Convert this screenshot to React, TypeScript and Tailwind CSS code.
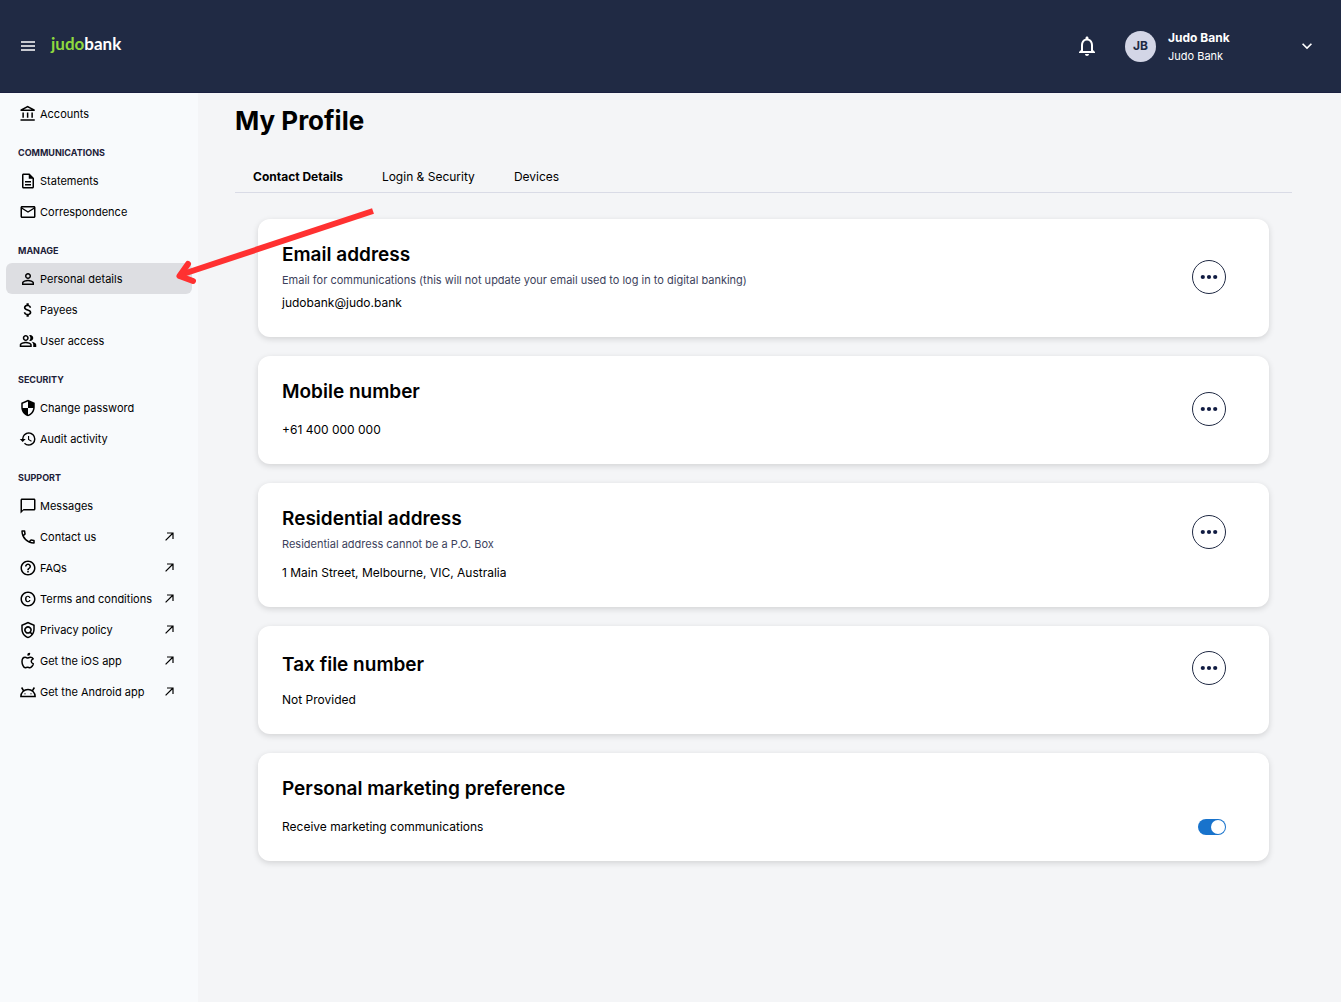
import { ReactNode } from "react";
import { IconType } from "react-icons";
import {
  MdAttachMoney,
  MdCopyright,
  MdHelpOutline,
  MdHistory,
  MdKeyboardArrowDown,
  MdNotificationsNone,
  MdOutlineAccountBalance,
  MdOutlineChatBubbleOutline,
  MdOutlineDescription,
  MdOutlineLocalPhone,
  MdOutlineMail,
  MdOutlinePeopleAlt,
  MdOutlinePolicy,
  MdPersonOutline,
  MdSecurity,
} from "react-icons/md";
import { TbBrandApple } from "react-icons/tb";

type NavItem = {
  label: string;
  icon: ReactNode;
  active?: boolean;
  external?: boolean;
};

type NavGroup = {
  title?: string;
  items: NavItem[];
};

const icon = (Icon: IconType) => <Icon className="size-[18px]" />;

const groups: NavGroup[] = [
  { items: [{ label: "Accounts", icon: icon(MdOutlineAccountBalance) }] },
  {
    title: "Communications",
    items: [
      { label: "Statements", icon: icon(MdOutlineDescription) },
      { label: "Correspondence", icon: icon(MdOutlineMail) },
    ],
  },
  {
    title: "Manage",
    items: [
      { label: "Personal details", icon: icon(MdPersonOutline), active: true },
      { label: "Payees", icon: icon(MdAttachMoney) },
      { label: "User access", icon: icon(MdOutlinePeopleAlt) },
    ],
  },
  {
    title: "Security",
    items: [
      { label: "Change password", icon: icon(MdSecurity) },
      { label: "Audit activity", icon: icon(MdHistory) },
    ],
  },
  {
    title: "Support",
    items: [
      { label: "Messages", icon: icon(MdOutlineChatBubbleOutline) },
      { label: "Contact us", icon: icon(MdOutlineLocalPhone), external: true },
      { label: "FAQs", icon: icon(MdHelpOutline), external: true },
      { label: "Terms and conditions", icon: icon(MdCopyright), external: true },
      { label: "Privacy policy", icon: icon(MdOutlinePolicy), external: true },
      { label: "Get the iOS app", icon: icon(TbBrandApple), external: true },
      { label: "Get the Android app", icon: <AndroidIcon />, external: true },
    ],
  },
];

const tabs = ["Contact Details", "Login & Security", "Devices"];

export default function App() {
  return (
    <div className="relative flex min-h-screen flex-col bg-[#f4f5f7] font-['Inter',sans-serif] text-black">
      <Header />
      <div className="flex flex-1">
        <Sidebar />
        <main className="min-w-0 flex-1 pr-[49px] pl-[37px]">
          <h1 className="pt-2.5 text-[26px] leading-9 font-bold">My Profile</h1>
          <nav className="mt-7 flex gap-[39px] border-b border-[#d9dbe6] px-[18px] pb-[5px]" aria-label="Profile sections">
            {tabs.map((t, i) => (
              <a key={t} href="#" className={i === 0 ? "text-xs leading-5 font-bold" : "text-xs leading-5"}>
                {t}
              </a>
            ))}
          </nav>
          <div className="flex flex-col gap-[19px] px-[23px] py-[26px]">
            <Card
              title="Email address"
              hint="Email for communications (this will not update your email used to log in to digital banking)"
              action={<MoreButton label="Edit email address" />}
            >
              <p className="mt-0.5">judobank@judo.bank</p>
            </Card>
            <Card title="Mobile number" action={<MoreButton label="Edit mobile number" />}>
              <p className="mt-3.5">+61 400 000 000</p>
            </Card>
            <Card
              title="Residential address"
              hint="Residential address cannot be a P.O. Box"
              action={<MoreButton label="Edit residential address" className="mt-2.5 self-start" />}
            >
              <p className="mt-2">1 Main Street, Melbourne, VIC, Australia</p>
            </Card>
            <Card
              title="Tax file number"
              className="pt-[25px]"
              action={<MoreButton label="Edit tax file number" className="self-start" />}
            >
              <p className="mt-[11px]">Not Provided</p>
            </Card>
            <Card title="Personal marketing preference" action={<Toggle />}>
              <label htmlFor="marketing" className="mt-3.5 block">
                Receive marketing communications
              </label>
            </Card>
          </div>
        </main>
      </div>
      <Pointer />
    </div>
  );
}

function Header() {
  return (
    <header className="flex h-[93px] items-center border-b border-[#1a2040] bg-[#202a44] pr-6 pl-[21px] text-white">
      <button aria-label="Toggle menu">
        <svg width="14" height="10" viewBox="0 0 14 10" stroke="currentColor" strokeWidth="1.3">
          <path d="M0 1h14M0 5h14M0 9h14" />
        </svg>
      </button>
      <a href="#" className="ml-4 pb-1 font-['Lato',sans-serif] text-[17px] leading-6 font-bold">
        <span className="text-[#8fd93f]">judo</span>
        <span>bank</span>
      </a>
      <button aria-label="Notifications" className="ml-auto">
        <MdNotificationsNone className="size-6" />
      </button>
      <button className="ml-[26px] flex w-[192px] items-center text-left">
        <span className="flex size-[31px] items-center justify-center rounded-full bg-[#d3d6e6] text-xs font-bold text-[#202a44]">
          JB
        </span>
        <span className="ml-3 flex flex-col pt-0.5">
          <span className="text-xs leading-[18px] font-bold">Judo Bank</span>
          <span className="text-[11px] leading-[18px]">Judo Bank</span>
        </span>
        <MdKeyboardArrowDown className="ml-auto size-5" />
      </button>
    </header>
  );
}

function Sidebar() {
  return (
    <nav className="w-[198px] shrink-0 bg-[#f8fafc] px-1.5 pt-[5px]" aria-label="Main">
      {groups.map((g, gi) => (
        <section key={gi}>
          {g.title && (
            <h2 className="px-3 pt-4 pb-1 text-[9px] leading-4 font-bold text-[#1c2038] uppercase">{g.title}</h2>
          )}
          <ul>
            {g.items.map((item) => (
              <li key={item.label}>
                <NavLink item={item} />
              </li>
            ))}
          </ul>
        </section>
      ))}
    </nav>
  );
}

function NavLink({ item }: { item: NavItem }) {
  return (
    <a
      href="#"
      aria-current={item.active ? "page" : undefined}
      className={`flex h-[31px] items-center gap-[3px] rounded-md pr-[18px] pl-[13px] text-[11px] leading-4 ${item.active ? "bg-[#dddee2]" : ""}`}
    >
      {item.icon}
      <span className="flex-1 whitespace-nowrap">{item.label}</span>
      {item.external && (
        <svg width="9" height="9" viewBox="0 0 9 9" fill="none" stroke="currentColor" strokeWidth="1.2">
          <path d="M0.6 8.4 8 1M2 1h6v6" />
        </svg>
      )}
    </a>
  );
}

type CardProps = {
  title: string;
  hint?: string;
  action: ReactNode;
  className?: string;
  children: ReactNode;
};

function Card({ title, hint, action, className = "pt-[22px]", children }: CardProps) {
  return (
    <section
      className={`flex items-center justify-between rounded-xl bg-white pr-[43px] pb-6 pl-6 shadow-[0_2px_6px_rgba(0,0,0,0.14)] ${className}`}
    >
      <div className="text-xs leading-5">
        <h2 className="text-[19px] leading-7 font-semibold">{title}</h2>
        {hint && <p className="text-[11px] leading-[22px] text-[#3c3f5c]">{hint}</p>}
        {children}
      </div>
      {action}
    </section>
  );
}

function MoreButton({ label, className = "" }: { label: string; className?: string }) {
  return (
    <button
      aria-label={label}
      className={`flex size-[34px] shrink-0 items-center justify-center rounded-full border border-[#202a44] text-[#101b42] ${className}`}
    >
      <svg width="18" height="6" viewBox="0 0 18 6" fill="currentColor">
        <circle cx="2.8" cy="3" r="2.1" />
        <circle cx="9" cy="3" r="2.1" />
        <circle cx="15.2" cy="3" r="2.1" />
      </svg>
    </button>
  );
}

function Toggle() {
  return (
    <input
      id="marketing"
      type="checkbox"
      role="switch"
      defaultChecked
      className="mb-0.5 h-4 w-7 appearance-none self-end rounded-full bg-gray-300 p-px before:block before:size-3.5 before:rounded-full before:bg-white checked:bg-[#1873cc] checked:before:ml-3"
    />
  );
}

function AndroidIcon() {
  return (
    <svg className="size-[18px]" viewBox="0 0 24 24" fill="none" stroke="currentColor" strokeWidth="2">
      <path d="M2.5 18a9.5 9.5 0 0 1 19 0zM3.5 6l3 5M20.5 6l-3 5" />
      <circle cx="8" cy="14.5" r="0.4" strokeWidth="1" />
      <circle cx="16" cy="14.5" r="0.4" strokeWidth="1" />
    </svg>
  );
}

// Red arrow that points at the selected menu item
function Pointer() {
  return (
    <svg
      className="pointer-events-none absolute top-[200px] left-[170px]"
      width="210"
      height="90"
      viewBox="0 0 210 90"
      fill="none"
      stroke="#ff3131"
      strokeWidth="6"
      strokeLinejoin="round"
    >
      <path d="M203 11 10 75" />
      <path d="M18 64 9.500 76 23 81" strokeLinecap="round" />
    </svg>
  );
}
